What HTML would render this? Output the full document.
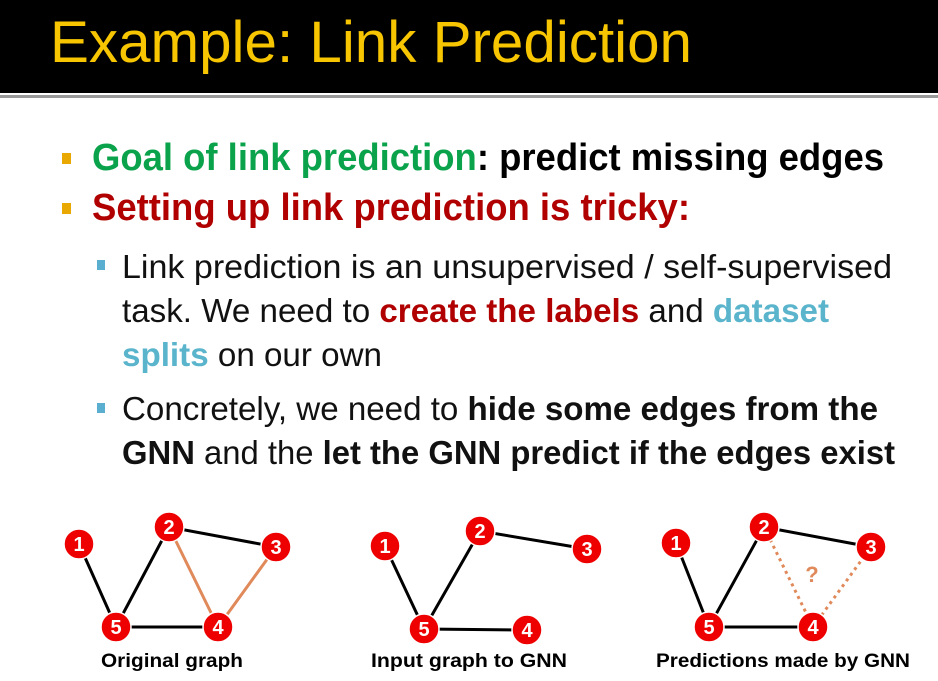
<!DOCTYPE html>
<html><head><meta charset="utf-8"><style>
body{margin:0;width:938px;height:681px;background:#fff;position:relative;overflow:hidden;font-family:"Liberation Sans",sans-serif}
.hdr{position:absolute;left:0;top:0;width:938px;height:93px;background:#000}
.l1{position:absolute;left:0;top:95px;width:938px;height:3px;background:#999}
.t{position:absolute;white-space:nowrap;transform-origin:0 0}
.title{color:#f7c600;font-size:58px;left:50px;top:9px}
.b1{font-weight:bold;font-size:38px}
.s{font-size:33px;color:#111}
.sq{position:absolute;width:9px;height:11px;background:#e8a800}
.sq2{position:absolute;width:8px;height:10px;background:#5aaed0}
.g{color:#0aa34c}.r{color:#b00000}.c{color:#5ab4cc}
b{font-weight:bold}
.lab{position:absolute;font-weight:bold;font-size:19px;top:651px;white-space:nowrap;transform:translateX(-50%)}
</style></head><body>
<div class="hdr"></div><div class="l1"></div>
<div class="t title" id="t0">Example: Link Prediction</div>
<div class="sq" style="left:62px;top:153px"></div>
<div class="t b1" id="t1" style="left:92px;top:137px"><span class="g">Goal of link prediction</span>: predict missing edges</div>
<div class="sq" style="left:62px;top:203px"></div>
<div class="t b1 r" id="t2" style="left:92px;top:187px">Setting up link prediction is tricky:</div>
<div class="sq2" style="left:97px;top:260px"></div>
<div class="t s" id="t3" style="left:122px;top:248px">Link prediction is an unsupervised / self-supervised</div>
<div class="t s" id="t4" style="left:122px;top:292px">task. We need to <b class="r">create the labels</b> and <b class="c">dataset</b></div>
<div class="t s" id="t5" style="left:122px;top:336px"><b class="c">splits</b> on our own</div>
<div class="sq2" style="left:97px;top:403px"></div>
<div class="t s" id="t6" style="left:122px;top:390px">Concretely, we need to <b>hide some edges from the</b></div>
<div class="t s" id="t7" style="left:122px;top:434px"><b>GNN</b> and the <b>let the GNN predict if the edges exist</b></div>

<svg width="938" height="681" style="position:absolute;left:0;top:0">
<g stroke-width="3" fill="none">
<path d="M79 544L116 627L169 527L276 547M116 627L218 627" stroke="#000"/>
<path d="M169 527L218 627L276 547" stroke="#e0895a"/>
<path d="M385 546L424 629L480 531L587 549M424 629L527 630" stroke="#000"/>
<path d="M676 543L709 627L764 527L871 547M709 627L813 627" stroke="#000"/>
<path d="M764 527L813 627L871 547" stroke="#e0895a" stroke-dasharray="3 4"/>
</g>
<g fill="#ee0000" stroke="#fff" stroke-width="1.5">
<circle cx="79" cy="544" r="15"/><circle cx="169" cy="527" r="15"/><circle cx="276" cy="547" r="15"/><circle cx="116" cy="627" r="15"/><circle cx="218" cy="627" r="15"/>
<circle cx="385" cy="546" r="15"/><circle cx="480" cy="531" r="15"/><circle cx="587" cy="549" r="15"/><circle cx="424" cy="629" r="15"/><circle cx="527" cy="630" r="15"/>
<circle cx="676" cy="543" r="15"/><circle cx="764" cy="527" r="15"/><circle cx="871" cy="547" r="15"/><circle cx="709" cy="627" r="15"/><circle cx="813" cy="627" r="15"/>
</g>
<g fill="#fff" font-family="Liberation Sans" font-weight="bold" font-size="20" text-anchor="middle">
<text x="79" y="551">1</text><text x="169" y="534">2</text><text x="276" y="554">3</text><text x="116" y="634">5</text><text x="218" y="634">4</text>
<text x="385" y="553">1</text><text x="480" y="538">2</text><text x="587" y="556">3</text><text x="424" y="636">5</text><text x="527" y="637">4</text>
<text x="676" y="550">1</text><text x="764" y="534">2</text><text x="871" y="554">3</text><text x="709" y="634">5</text><text x="813" y="634">4</text>
</g>
<text x="812" y="582" fill="#e0895a" font-family="Liberation Sans" font-weight="bold" font-size="22" text-anchor="middle">?</text>
</svg>
<div class="lab" style="left:172px">Original graph</div>
<div class="lab" style="left:469px">Input graph to GNN</div>
<div class="lab" style="left:783px">Predictions made by GNN</div>
<script>
var W=[642,792,598,770,707,260,756,773];
for(var i=0;i<W.length;i++){var e=document.getElementById('t'+i);var w=e.getBoundingClientRect().width;e.style.transform='scaleX('+(W[i]/w)+')';}
var L=document.querySelectorAll('.lab');var LW=[142,196,254];
for(var j=0;j<L.length;j++){var w2=L[j].getBoundingClientRect().width;L[j].style.transform='translateX(-50%) scaleX('+(LW[j]/w2)+')';}
</script>
</body></html>
